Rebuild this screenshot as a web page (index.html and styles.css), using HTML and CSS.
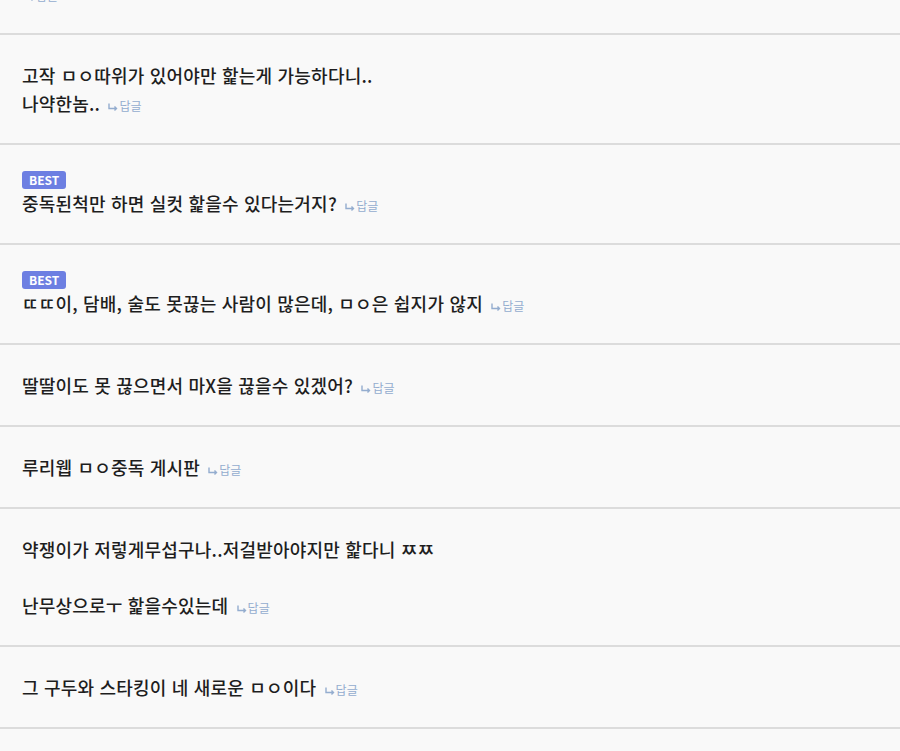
FILE: index.html
```html
<!DOCTYPE html>
<html lang="ko">
<head>
    <meta charset="UTF-8">
    <meta name="viewport" content="width=device-width, initial-scale=1.0">
    <title>댓글</title>
    <link rel="stylesheet" href="styles.css">
</head>
<body>
    <ul class="comments">
        <li class="comment">
            <p class="text"><a class="reply" href="#"><svg class="reply-icon" viewBox="0 0 10 8"><path d="M1 0.5V5.5H8.5M6.5 3.5L8.5 5.5L6.5 7.5"/></svg>답글</a></p>
        </li>
        <li class="comment">
            <p class="text">고작 ㅁㅇ따위가 있어야만 핥는게 가능하다니..<br>나약한놈.. <a class="reply" href="#"><svg class="reply-icon" viewBox="0 0 10 8"><path d="M1 0.5V5.5H8.5M6.5 3.5L8.5 5.5L6.5 7.5"/></svg>답글</a></p>
        </li>
        <li class="comment">
            <span class="best">BEST</span>
            <p class="text">중독된척만 하면 실컷 핥을수 있다는거지? <a class="reply" href="#"><svg class="reply-icon" viewBox="0 0 10 8"><path d="M1 0.5V5.5H8.5M6.5 3.5L8.5 5.5L6.5 7.5"/></svg>답글</a></p>
        </li>
        <li class="comment">
            <span class="best">BEST</span>
            <p class="text">ㄸㄸ이, 담배, 술도 못끊는 사람이 많은데, ㅁㅇ은 쉽지가 않지 <a class="reply" href="#"><svg class="reply-icon" viewBox="0 0 10 8"><path d="M1 0.5V5.5H8.5M6.5 3.5L8.5 5.5L6.5 7.5"/></svg>답글</a></p>
        </li>
        <li class="comment">
            <p class="text">딸딸이도 못 끊으면서 마X을 끊을수 있겠어? <a class="reply" href="#"><svg class="reply-icon" viewBox="0 0 10 8"><path d="M1 0.5V5.5H8.5M6.5 3.5L8.5 5.5L6.5 7.5"/></svg>답글</a></p>
        </li>
        <li class="comment">
            <p class="text">루리웹 ㅁㅇ중독 게시판 <a class="reply" href="#"><svg class="reply-icon" viewBox="0 0 10 8"><path d="M1 0.5V5.5H8.5M6.5 3.5L8.5 5.5L6.5 7.5"/></svg>답글</a></p>
        </li>
        <li class="comment">
            <p class="text">약쟁이가 저렇게무섭구나..저걸받아야지만 핥다니 ㅉㅉ<br><br>난무상으로ㅜ 핥을수있는데 <a class="reply" href="#"><svg class="reply-icon" viewBox="0 0 10 8"><path d="M1 0.5V5.5H8.5M6.5 3.5L8.5 5.5L6.5 7.5"/></svg>답글</a></p>
        </li>
        <li class="comment">
            <p class="text">그 구두와 스타킹이 네 새로운 ㅁㅇ이다 <a class="reply" href="#"><svg class="reply-icon" viewBox="0 0 10 8"><path d="M1 0.5V5.5H8.5M6.5 3.5L8.5 5.5L6.5 7.5"/></svg>답글</a></p>
        </li>
        <li class="comment">
            <p class="text">&nbsp;</p>
        </li>
    </ul>
</body>
</html>
```

FILE: styles.css
```css
body {
    margin: 0;
    padding: 0;
    background-color: #f9f9f9;
    font-family: "Noto Sans CJK KR", "Noto Sans", sans-serif;
    color: #1e1e1e;
    overflow: hidden;
}
.comments {
    list-style: none;
    margin: -47px 0 0 0;
    padding: 0;
}
.comment {
    display: flex;
    flex-direction: column;
    align-items: flex-start;
    padding: 26px 22px;
    border-bottom: 2px solid #dcdcdc;
}
.text {
    margin: 0;
    font-size: 18px;
    font-weight: 500;
    line-height: 28px;
    letter-spacing: 0.2px;
}
.best {
    height: 18px;
    line-height: 18px;
    padding: 0 7px;
    background-color: #6d7fe2;
    color: #fff;
    font-size: 12px;
    font-weight: bold;
    border-radius: 3px;
}
.reply {
    margin-left: 3px;
    font-size: 12px;
    font-weight: 400;
    line-height: 1;
    letter-spacing: 0;
    color: #94adcf;
    text-decoration: none;
}
.reply-icon {
    width: 10px;
    height: 8px;
    margin-right: 1px;
    fill: none;
    stroke: #94adcf;
    stroke-width: 1.4;
}
```
